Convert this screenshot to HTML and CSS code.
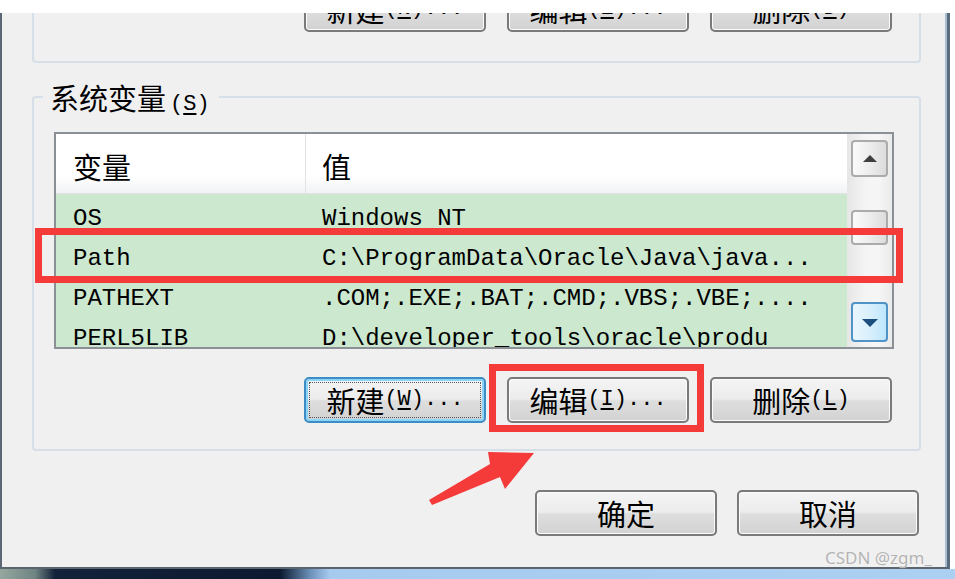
FILE: index.html
```html
<!DOCTYPE html>
<html lang="zh-CN">
<head>
    <meta charset="UTF-8">
    <title>环境变量</title>
    <link rel="stylesheet" href="styles.css">
</head>
<body>
    <div class="screen">
        <div class="dialog">
            <!-- 用户变量（上半部分被截掉） -->
            <fieldset class="group group-user">
                <div class="btn-row">
                    <button class="btn"><span>新建</span><span class="mn">(<u>N</u>)...</span></button>
                    <button class="btn"><span>编辑</span><span class="mn">(<u>E</u>)...</span></button>
                    <button class="btn"><span>删除</span><span class="mn">(<u>D</u>)</span></button>
                </div>
            </fieldset>

            <!-- 系统变量 -->
            <fieldset class="group group-sys">
                <legend class="group-title">系统变量<span class="mn">(<u>S</u>)</span></legend>
                <div class="listview">
                    <div class="list-main">
                        <div class="list-head">
                            <div class="cell">变量</div>
                            <div class="cell">值</div>
                        </div>
                        <div class="list-rows">
                            <div class="row"><span>OS</span><span>Windows NT</span></div>
                            <div class="row"><span>Path</span><span>C:\ProgramData\Oracle\Java\java...</span></div>
                            <div class="row"><span>PATHEXT</span><span>.COM;.EXE;.BAT;.CMD;.VBS;.VBE;....</span></div>
                            <div class="row"><span>PERL5LIB</span><span>D:\developer_tools\oracle\produ</span></div>
                        </div>
                    </div>
                    <div class="scrollbar">
                        <div class="sb-btn">
                            <svg width="14" height="8" viewBox="0 0 14 8"><polygon points="7,0 14,7 0,7" fill="#3f3f3f"/></svg>
                        </div>
                        <div class="sb-btn sb-thumb"></div>
                        <div class="sb-btn sb-down">
                            <svg width="16" height="9" viewBox="0 0 16 9"><polygon points="0,1 16,1 8,9" fill="#1c4f7e"/></svg>
                        </div>
                    </div>
                </div>
                <div class="btn-row">
                    <button class="btn btn-focus"><span>新建</span><span class="mn">(<u>W</u>)...</span></button>
                    <button class="btn"><span>编辑</span><span class="mn">(<u>I</u>)...</span></button>
                    <button class="btn"><span>删除</span><span class="mn">(<u>L</u>)</span></button>
                </div>
            </fieldset>

            <div class="dialog-actions">
                <button class="btn">确定</button>
                <button class="btn">取消</button>
            </div>
        </div>
        <div class="taskbar"></div>

        <!-- 标注 -->
        <svg class="marks" width="955" height="579" viewBox="0 0 955 579">
            <rect x="38.5" y="231.5" width="861" height="48" fill="none" stroke="#f53a3a" stroke-width="7"/>
            <rect x="492.5" y="367.5" width="208" height="61" fill="none" stroke="#f53a3a" stroke-width="7"/>
            <polygon points="429,500 490,464 488,452 534,453 505,489 500,477 432,505" fill="#f53a3a"/>
        </svg>
        <div class="watermark">CSDN @zgm_</div>
    </div>
</body>
</html>
```

FILE: styles.css
```css
body {
    margin: 0;
    background: #fff;
    font-family: "Noto Sans CJK SC", sans-serif;
    color: #000;
}
.screen {
    position: relative;
    width: 955px;
    height: 579px;
    padding-top: 13px;
    box-sizing: border-box;
    overflow: hidden;
}
.dialog {
    width: 950px;
    height: 556px;
    box-sizing: border-box;
    padding: 0 26px 0 30px;
    background: #f0f0f0;
    border-left: 2px solid #5b6775;
    border-right: 3px solid #5a6b7e;
    border-bottom: 2px solid #5b6570;
    box-shadow: inset -2px 0 0 #a9bed3;
    overflow: hidden;
}
.taskbar {
    height: 10px;
    background: linear-gradient(90deg, #95a79e 0, #6f8483 35px, #13213a 55px, #0c1930 280px, #6b8fb8 310px, #a7cbef 330px, #acd0f2 100%);
}

/* 分组框 */
.group {
    margin: 0;
    min-width: 0;
    border: 2px solid #d6dfe7;
    border-radius: 4px;
}
.group-user {
    margin-top: -27px;
    border-top: 0;
    border-radius: 0 0 4px 4px;
    padding: 0 27px 29px 0;
}
.group-sys {
    margin-top: 17px;
    padding: 18px 25px 26px 20px;
}
.group-title {
    height: 34px;
    margin-left: -11px;
    padding: 0 9px 0 7px;
    font-size: 29px;
    line-height: 34px;
}
.group-title .mn {
    margin-left: 4px;
}
.mn {
    font-family: "Liberation Mono", monospace;
    font-size: 22px;
    line-height: 1;
}
u {
    text-underline-offset: 3px;
}

/* 按钮 */
.btn-row {
    display: flex;
    justify-content: flex-end;
    gap: 21px;
}
.group-sys .btn-row {
    margin-top: 28px;
    padding-right: 2px;
}
.btn {
    width: 182px;
    height: 46px;
    box-sizing: border-box;
    padding: 0;
    display: flex;
    align-items: center;
    justify-content: center;
    border: 2px solid #7a7a7a;
    border-radius: 5px;
    background: linear-gradient(#f4f4f4, #ececec 48%, #dedede 52%, #d2d2d2);
    box-shadow: inset 0 0 0 1px #fbfbfb;
    font-family: "Noto Sans CJK SC", sans-serif;
    font-size: 29px;
    color: #000;
}
.btn-focus {
    border-color: #3c8dc5;
    box-shadow: inset 0 0 0 2px #8fd3f5;
    outline: 1px dotted #555;
    outline-offset: -6px;
}
.dialog-actions {
    display: flex;
    justify-content: flex-end;
    gap: 20px;
    margin-top: 39px;
    padding-right: 2px;
}

/* 列表 */
.listview {
    height: 217px;
    box-sizing: border-box;
    border: 2px solid #8b9096;
    display: grid;
    grid-template-columns: 1fr 45px;
    background: #cce8cf;
}
.list-main {
    overflow: hidden;
}
.list-head {
    height: 60px;
    box-sizing: border-box;
    display: grid;
    grid-template-columns: 250px 1fr;
    background: linear-gradient(#fff, #fff 72%, #f1f2f4);
    border-bottom: 1px solid #e2e4e7;
    font-size: 29px;
}
.list-head .cell {
    padding: 6px 0 0 17px;
    line-height: 53px;
}
.list-head .cell:first-child {
    border-right: 1px solid #e3e3e3;
}
.list-head .cell + .cell {
    padding-left: 16px;
}
.list-rows {
    padding-top: 5px;
    font-family: "Liberation Mono", monospace;
    font-size: 24px;
}
.row {
    display: grid;
    grid-template-columns: 250px 1fr;
    height: 40px;
    line-height: 40px;
    white-space: nowrap;
}
.row span:first-child {
    padding-left: 17px;
}
.row span + span {
    padding-left: 16px;
}

/* 滚动条 */
.scrollbar {
    display: flex;
    flex-direction: column;
    padding: 6px 4px 5px;
    background: linear-gradient(90deg, #e6e6e6, #f4f4f4 40%, #f6f6f6 70%, #eaeaea);
}
.sb-btn {
    height: 37px;
    box-sizing: border-box;
    display: flex;
    align-items: center;
    justify-content: center;
    border: 2px solid #ababab;
    border-radius: 4px;
    background: linear-gradient(90deg, #fafafa, #ededed 50%, #dcdcdc);
}
.sb-thumb {
    height: 35px;
    margin-top: 33px;
}
.sb-down {
    height: 40px;
    margin-top: auto;
    border-color: #4f93c7;
    background: linear-gradient(90deg, #eaf6fd, #d9f0fc 50%, #bee6fd);
}

/* 标注和水印 */
.marks {
    position: absolute;
    top: 0;
    left: 0;
    pointer-events: none;
}
.watermark {
    position: absolute;
    left: 825px;
    top: 548px;
    font-family: "Noto Sans", sans-serif;
    font-size: 17px;
    line-height: 20px;
    color: #b3b3b3;
    text-shadow: 0 0 1px #fff;
}
```
